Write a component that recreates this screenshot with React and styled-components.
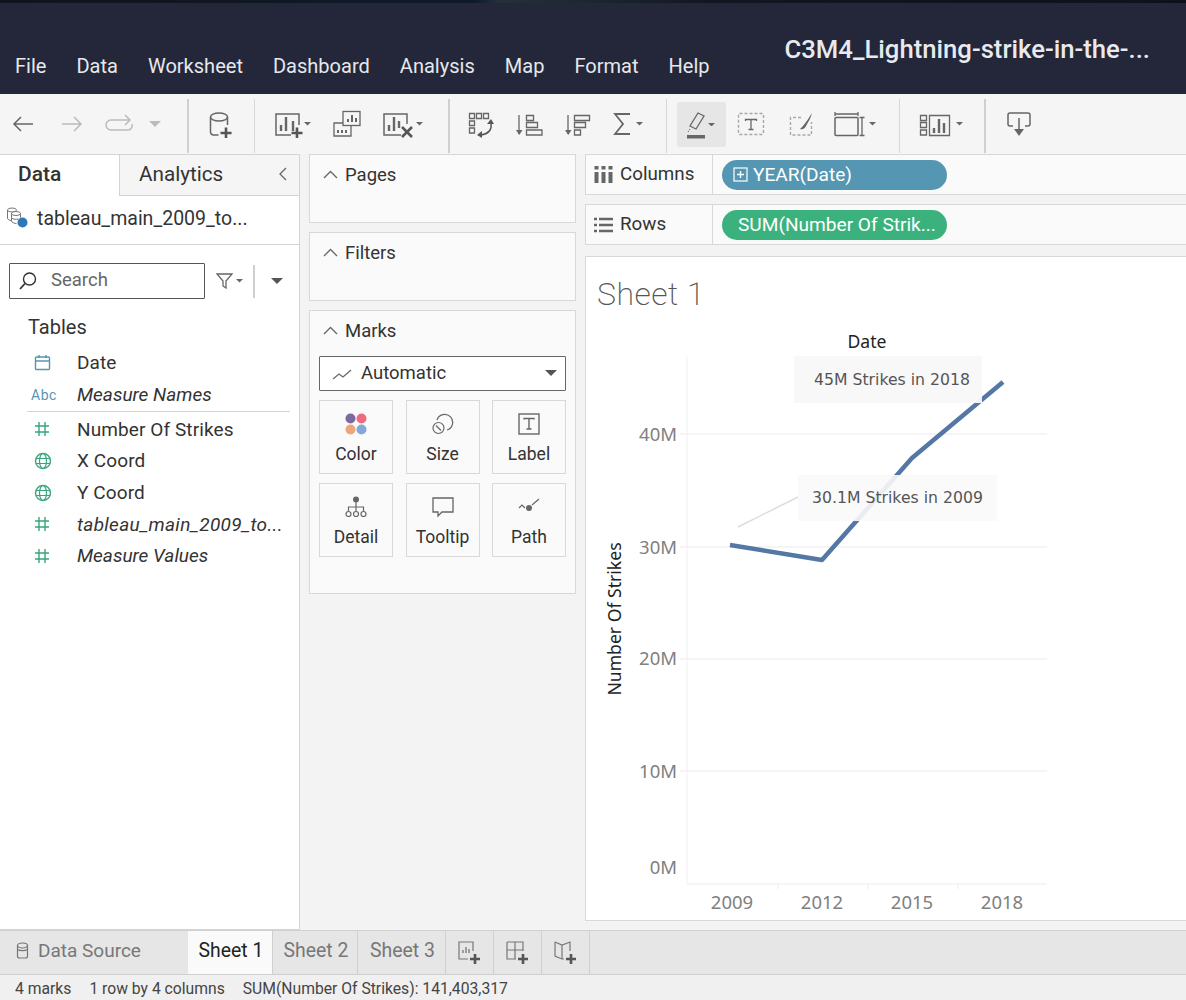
import React from "react";
import styled, { createGlobalStyle } from "styled-components";

const GlobalStyle = createGlobalStyle`
  html, body { margin: 0; padding: 0; background: #f3f3f3; }
  * { box-sizing: border-box; }
  body { font-family: Roboto, "Liberation Sans", sans-serif; color: #333; overflow: hidden; }
`;

const menus = ["File", "Data", "Worksheet", "Dashboard", "Analysis", "Map", "Format", "Help"];

const Caret = ({ size = 5, color = "#666" }) => (
  <svg width={size * 2} height={size} viewBox="0 0 10 5"><path d="M0 0h10L5 5z" fill={color} /></svg>
);

const g = { fill: "none", stroke: "#666", strokeWidth: 1.5 };
const thin = { fill: "none", stroke: "#666", strokeWidth: 1.3 };

const Plus = ({ x, y, s = 5, color = "#555" }) => (
  <path d={`M${x - s} ${y}h${s * 2}M${x} ${y - s}v${s * 2}`} stroke={color} strokeWidth="2.6" fill="none" />
);

// every toolbar svg is 28 high and starts at y=110, so coordinates read straight off the screen
const Tool = ({ ml, w, gap = 0, caret, faded, children }) => (
  <ToolButton $ml={ml} $gap={gap} $faded={faded}>
    <svg width={w} height="28" viewBox={`0 0 ${w} 28`}>{children}</svg>
    {caret && <Caret size={3.5} />}
  </ToolButton>
);

const Toolbar = () => (
  <Bar>
    <Tool ml={11} w={24}><path d="M22 14H3M10 7l-7 7 7 7" {...g} /></Tool>
    <Tool ml={25} w={24} faded><path d="M2 14h19M14 7l7 7-7 7" {...g} /></Tool>
    <Tool ml={21} w={30} faded>
      <path d="M25 10H6a4.500 4.500 0 0 0 0 10h17a4.500 4.500 0 0 0 4-6" {...g} />
      <path d="M20 5l5 5-5 5" {...g} />
    </Tool>
    <ToolButton $ml={14} $faded><Caret size={6} /></ToolButton>
    <Sep $ml={26} $thick />

    <Tool ml={19} w={26}>
      <ellipse cx="11" cy="7" rx="8.500" ry="4" {...g} />
      <path d="M2.500 7v15a3 3 0 0 0 3 3h5M19.500 7v8" {...g} />
      <Plus x={18} y={23} s={5.5} />
    </Tool>
    <Sep $ml={20} />

    <Tool ml={19} w={30} caret>
      <path d="M17 25H2V4h23v11" {...g} />
      <path d="M7 21v-6M12 21V7M19 21V11" stroke="#666" strokeWidth="2.400" />
      <Plus x={23} y={23} s={5.5} />
    </Tool>
    <Tool ml={21} w={30}>
      <path d="M11 13H2v13h17V15" {...thin} />
      <rect x="11" y="1.500" width="17" height="14" fill="#f5f5f5" stroke="#666" strokeWidth="1.300" />
      <path d="M16 12V9M20 12V5M24 12V8M6 23v-3M10 23v-3M14 23v-3" stroke="#666" strokeWidth="2" />
    </Tool>
    <Tool ml={20} w={34} caret>
      <path d="M19 25H2V4h23v10" {...g} />
      <path d="M7 21v-6M12 21V7M17 18V11" stroke="#666" strokeWidth="2.400" />
      <path d="M20 17l10 10M30 17L20 27" stroke="#555" strokeWidth="2.600" />
    </Tool>
    <Sep $ml={25} $thick />

    <Tool ml={18} w={26}>
      <path d="M1.500 3.500h5v5h-5zM8.500 3.500h5v5h-5zM15.500 3.500h5v5h-5zM1.500 11h5v4.500h-5zM1.500 18h5v5h-5z" {...thin} />
      <path d="M23 14c1 6-3 10-10 11" fill="none" stroke="#555" strokeWidth="1.500" />
      <path d="M23 9l-4 5h7zM9 25l5-4v7z" fill="#555" />
    </Tool>
    <Tool ml={22} w={28}>
      <path d="M3 5v19" {...thin} />
      <path d="M0 20h6.500l-3.250 5z" fill="#666" />
      <path d="M10.500 5.500h7v5h-7zM10.500 12.500h11v5h-11zM10.500 20h15.500v5h-15.500z" {...thin} />
    </Tool>
    <Tool ml={21} w={27}>
      <path d="M3 5v19" {...thin} />
      <path d="M0 20h6.500l-3.250 5z" fill="#666" />
      <path d="M9.500 5.500h15v5h-15zM9.500 12.500h11v5h-11zM9.500 20h6v5h-6z" {...thin} />
    </Tool>
    <Tool ml={20} w={20} gap={4} caret>
      <path d="M18 4H3l8 10-8 10h15" fill="none" stroke="#666" strokeWidth="1.800" />
    </Tool>
    <Sep $ml={23} />

    <ActiveTool>
      <svg width="22" height="28" viewBox="0 0 22 28">
        <path d="M12 2l6 3-8 13-6-3z" {...thin} />
        <path d="M4 18l-2 3" stroke="#666" strokeDasharray="1.500 1" />
        <rect x="1" y="24" width="18" height="3.500" fill="#666" />
      </svg>
      <Caret size={3.5} />
    </ActiveTool>

    <Tool ml={11} w={28}>
      <rect x="1.500" y="3.500" width="25" height="21" rx="1" fill="none" stroke="#a8a8a8" strokeWidth="1.400" strokeDasharray="3 2" />
      <path d="M8.500 11V9.500h11V11M14 9.500v10M11.500 19.500h5" {...thin} />
    </Tool>
    <Tool ml={24} w={24}>
      <path d="M12 7.500H1.500v17.500h21V12" fill="none" stroke="#a8a8a8" strokeWidth="1.400" strokeDasharray="3 2" />
      <path d="M23 3c-3 5-6 9-9 13l-3 3c3 1 5-1 6-3 2-4 5-8 6-13z" fill="#666" />
    </Tool>
    <Tool ml={21} w={32} gap={3} caret>
      <path d="M1 4h23M1 2v4M24 2v4" {...thin} />
      <rect x="1" y="7.500" width="23" height="18" rx="1" {...g} />
      <path d="M28 7.500v18M25.500 7.500h5M25.500 25.500h5" {...thin} />
    </Tool>
    <Sep $ml={23} />

    <Tool ml={19} w={32} gap={5} caret>
      <path d="M1.500 5.500h6v5h-6zM1.500 12.500h6v5h-6zM1.500 20h6v5h-6zM10.500 5.500h20v20h-20z" {...thin} />
      <path d="M15 23v-5M20 23V9M25 23V13" stroke="#666" strokeWidth="2.400" />
    </Tool>
    <Sep $ml={21} $thick />

    <Tool ml={20} w={26}>
      <path d="M7 16H4a2 2 0 0 1-2-2V5a2 2 0 0 1 2-2h18a2 2 0 0 1 2 2v9a2 2 0 0 1-2 2h-3" {...g} />
      <path d="M13 8v13" {...g} />
      <path d="M8 19h10l-5 7z" fill="#666" />
    </Tool>
  </Bar>
);

const GridIcon = () => (
  <svg width="16" height="16" viewBox="0 0 16 16">
    <path d="M5 1v14M11 1v14M1 5h14M1 11h14" stroke="#37a77c" strokeWidth="1.400" fill="none" />
  </svg>
);

const GlobeIcon = () => (
  <svg width="18" height="18" viewBox="0 0 18 18">
    <circle cx="9" cy="9" r="7.500" fill="none" stroke="#37a77c" strokeWidth="1.400" />
    <ellipse cx="9" cy="9" rx="3.500" ry="7.500" fill="none" stroke="#37a77c" strokeWidth="1.200" />
    <path d="M2 6.500h14M2 11.500h14" stroke="#37a77c" strokeWidth="1.200" />
  </svg>
);

const CalendarIcon = () => (
  <svg width="17" height="17" viewBox="0 0 17 17">
    <rect x="1.500" y="3" width="14" height="12.500" rx="1" fill="none" stroke="#5596b3" strokeWidth="1.400" />
    <path d="M1.500 7h14M5 1v3M12 1v3" stroke="#5596b3" strokeWidth="1.400" />
  </svg>
);

const DataPanel = () => {
  const fields = [
    { icon: <CalendarIcon />, name: "Date" },
    { icon: <AbcMark>Abc</AbcMark>, name: "Measure Names", italic: true, divider: true },
    { icon: <GridIcon />, name: "Number Of Strikes" },
    { icon: <GlobeIcon />, name: "X Coord" },
    { icon: <GlobeIcon />, name: "Y Coord" },
    { icon: <GridIcon />, name: "tableau_main_2009_to...", italic: true, wide: true },
    { icon: <GridIcon />, name: "Measure Values", italic: true },
  ];
  return (
    <Side>
      <SideTabs>
        <SideTab $on>Data</SideTab>
        <SideTab>
          Analytics
          <svg width="12" height="16" viewBox="0 0 12 16"><path d="M9 2L3 8l6 6" fill="none" stroke="#666" strokeWidth="1.300" /></svg>
        </SideTab>
      </SideTabs>
      <SourceRow>
        <SourceIcon>
          <svg width="22" height="24" viewBox="0 0 22 24">
            <ellipse cx="6" cy="3" rx="4.500" ry="2" fill="none" stroke="#777" strokeWidth="1" />
            <ellipse cx="10" cy="6.500" rx="4.500" ry="2" fill="#fff" stroke="#777" strokeWidth="1" />
            <path d="M1.500 3v8c0 1.500 2 2.500 4 2.500M5.500 6.500v7.500c0 1.500 3 2.500 5 2.500M14.500 6.500v4M5.500 11c2 1.500 5 1.500 7 1" fill="none" stroke="#777" strokeWidth="1" />
            <circle cx="16.500" cy="15.500" r="5" fill="#2f78b7" />
          </svg>
        </SourceIcon>
        tableau_main_2009_to...
      </SourceRow>
      <SearchRow>
        <SearchBox>
          <svg width="20" height="20" viewBox="0 0 20 20">
            <circle cx="11.500" cy="8" r="6" fill="none" stroke="#333" strokeWidth="1.400" />
            <path d="M7 12.500L2 18" stroke="#333" strokeWidth="1.800" />
          </svg>
          <SearchHint>Search</SearchHint>
        </SearchBox>
        <FilterBtn>
          <svg width="17" height="16" viewBox="0 0 17 16"><path d="M1 1h15l-6 7v7l-3-2V8z" fill="none" stroke="#666" strokeWidth="1.300" /></svg>
          <Caret size={3.5} />
        </FilterBtn>
        <SearchSep />
        <MoreBtn><Caret size={6} color="#555" /></MoreBtn>
      </SearchRow>
      <TablesHead>Tables</TablesHead>
      {fields.map((f) => (
        <FieldRow key={f.name} $italic={f.italic} $divider={f.divider} $wide={f.wide}>
          <FieldIcon>{f.icon}</FieldIcon>
          {f.name}
        </FieldRow>
      ))}
    </Side>
  );
};

const MarkGlyph = {
  Color: (
    <svg width="22" height="22" viewBox="0 0 22 22">
      <circle cx="5.500" cy="5.500" r="5" fill="#7c6a9c" />
      <circle cx="16.500" cy="5.500" r="5" fill="#ee6b80" />
      <circle cx="5.500" cy="16.500" r="5" fill="#eda57a" />
      <circle cx="16.500" cy="16.500" r="5" fill="#85a9d6" />
    </svg>
  ),
  Size: (
    <svg width="22" height="22" viewBox="0 0 22 22">
      <path d="M5 7a8 8 0 1 1 10 10" fill="none" stroke="#666" strokeWidth="1.200" />
      <circle cx="6.500" cy="15" r="5.500" fill="none" stroke="#666" strokeWidth="1.200" />
      <path d="M4 12.500l5 5" stroke="#666" strokeWidth="1.200" />
    </svg>
  ),
  Label: (
    <svg width="22" height="22" viewBox="0 0 22 22">
      <rect x="1" y="1" width="20" height="20" fill="none" stroke="#666" strokeWidth="1.400" />
      <path d="M6 6.500V5.500h10v1M11 5.500V16M8.500 16h5" fill="none" stroke="#666" strokeWidth="1.400" />
    </svg>
  ),
  Detail: (
    <svg width="22" height="22" viewBox="0 0 22 22">
      <circle cx="11" cy="3.500" r="3" fill="#666" />
      <path d="M11 6v5M3.500 15v-4h15v4M11 11v4" fill="none" stroke="#666" strokeWidth="1.200" />
      <circle cx="3.500" cy="18" r="2.500" fill="none" stroke="#666" strokeWidth="1.200" />
      <circle cx="11" cy="18" r="2.500" fill="none" stroke="#666" strokeWidth="1.200" />
      <circle cx="18.500" cy="18" r="2.500" fill="none" stroke="#666" strokeWidth="1.200" />
    </svg>
  ),
  Tooltip: (
    <svg width="22" height="22" viewBox="0 0 22 22">
      <path d="M1 2h20v14H10l-4 4v-4H1z" fill="none" stroke="#666" strokeWidth="1.300" />
    </svg>
  ),
  Path: (
    <svg width="22" height="22" viewBox="0 0 22 22">
      <path d="M1 12l3-3 3 3M14 9l7-6" fill="none" stroke="#666" strokeWidth="1.200" />
      <circle cx="11" cy="12" r="3" fill="#666" />
    </svg>
  ),
};

const CollapseArrow = () => (
  <svg width="15" height="9" viewBox="0 0 15 9"><path d="M1 8l6.500-6.500L14 8" fill="none" stroke="#666" strokeWidth="1.300" /></svg>
);

const MiddlePanel = () => (
  <Middle>
    <Card $h={69}><CardHead><CollapseArrow />Pages</CardHead></Card>
    <Card $h={69}><CardHead><CollapseArrow />Filters</CardHead></Card>
    <Card $h={284}>
      <CardHead><CollapseArrow />Marks</CardHead>
      <MarkSelect>
        <svg width="20" height="12" viewBox="0 0 20 12"><path d="M1 11l6-5 4 3 8-7" fill="none" stroke="#666" strokeWidth="1.200" /></svg>
        <SelectText>Automatic</SelectText>
        <SelectCaret><Caret size={6} color="#555" /></SelectCaret>
      </MarkSelect>
      <MarkGrid>
        {Object.keys(MarkGlyph).map((k) => (
          <MarkCell key={k}>
            {MarkGlyph[k]}
            <span>{k}</span>
          </MarkCell>
        ))}
      </MarkGrid>
    </Card>
  </Middle>
);

const Chart = () => (
  <ChartSvg viewBox="585 330 601 590" width="601" height="590">
    <path d="M687 356V884" stroke="#f0f0f0" />
    {[434, 547, 659, 771].map((y) => (
      <path key={y} d={`M680 ${y}H1047`} stroke="#f2f2f2" strokeWidth="1.500" />
    ))}
    <path d="M687 884H1047M778 884v5M868 884v5M958 884v5" stroke="#ececec" />
    {[["40M", 441], ["30M", 554], ["20M", 665], ["10M", 778], ["0M", 874]].map(([t, y]) => (
      <AxisText key={t} x="677" y={y} textAnchor="end">{t}</AxisText>
    ))}
    {[[2009, 732], [2012, 822], [2015, 912], [2018, 1002]].map(([t, x]) => (
      <AxisText key={t} x={x} y="909" textAnchor="middle">{t}</AxisText>
    ))}
    <HeadText x="867" y="348" textAnchor="middle">Date</HeadText>
    <HeadText x="621" y="619" textAnchor="middle" transform="rotate(-90 621 619)">Number Of Strikes</HeadText>
    <path d="M738 527L798 497" stroke="#dddddd" strokeWidth="1.500" />
    <path d="M730 545L822 560L912 458L1003 382" fill="none" stroke="#5577a6" strokeWidth="4.500" strokeLinejoin="round" />
    <rect x="794" y="356" width="188" height="47" fill="#f8f8f8" fillOpacity="0.94" />
    <rect x="798" y="475" width="199" height="46" fill="#f9f9f9" fillOpacity="0.9" />
    <NoteText x="814" y="385">45M Strikes in 2018</NoteText>
    <NoteText x="812" y="503">30.1M Strikes in 2009</NoteText>
  </ChartSvg>
);

const SheetAdd = ({ children }) => (
  <AddTab>
    <svg width="26" height="26" viewBox="0 0 26 26">
      {children}
      <Plus x={18} y={19} s={5} />
    </svg>
  </AddTab>
);

export default function App() {
  return (
    <Page>
      <GlobalStyle />
      <TopStrip />
      <Header>
        <MenuRow>
          {menus.map((m) => <MenuItem key={m}>{m}</MenuItem>)}
        </MenuRow>
        <WorkbookTitle>C3M4_Lightning-strike-in-the-...</WorkbookTitle>
      </Header>
      <Toolbar />
      <Main>
        <DataPanel />
        <MiddlePanel />
        <Right>
          <Shelf>
            <ShelfLabel>
              <svg width="19" height="17" viewBox="0 0 19 17">
                <path d="M2.500 6v11M9.500 6v11M16.500 6v11" stroke="#666" strokeWidth="4" />
                <path d="M2.500 0v3.500M9.500 0v3.500M16.500 0v3.500" stroke="#666" strokeWidth="4" />
              </svg>
              <ShelfText>Columns</ShelfText>
            </ShelfLabel>
            <Pill $color="#5596b3">
              <svg width="15" height="15" viewBox="0 0 15 15">
                <rect x="1" y="1" width="13" height="13" fill="none" stroke="#fff" strokeWidth="1.200" />
                <path d="M4 7.500h7M7.500 4v7" stroke="#fff" strokeWidth="1.400" />
              </svg>
              YEAR(Date)
            </Pill>
          </Shelf>
          <Shelf>
            <ShelfLabel>
              <svg width="19" height="16" viewBox="0 0 19 16">
                <path d="M0 2h3M5 2h14M0 8h3M5 8h14M0 14h3M5 14h14" stroke="#666" strokeWidth="2.400" />
              </svg>
              <ShelfText>Rows</ShelfText>
            </ShelfLabel>
            <Pill $color="#3bb27e" $pad={16}>SUM(Number Of Strik...</Pill>
          </Shelf>
          <Sheet>
            <SheetTitle>Sheet 1</SheetTitle>
            <Chart />
          </Sheet>
        </Right>
      </Main>
      <Tabs>
        <SourceTab>
          <svg width="13" height="17" viewBox="0 0 13 17">
            <ellipse cx="6.500" cy="3.500" rx="5" ry="2.500" fill="none" stroke="#777" strokeWidth="1.200" />
            <path d="M1.500 3.500V14a2 2 0 0 0 2 2h6a2 2 0 0 0 2-2V3.500M1.500 7.500c2 1.500 8 1.500 10 0" fill="none" stroke="#777" strokeWidth="1.200" />
          </svg>
          Data Source
        </SourceTab>
        <SheetTab $on $w={85}>Sheet 1</SheetTab>
        <SheetTab $w={85}>Sheet 2</SheetTab>
        <SheetTab $w={88}>Sheet 3</SheetTab>
        <SheetAdd>
          <path d="M16 11V2H2v17h9" fill="none" stroke="#777" strokeWidth="1.200" />
          <path d="M6 13v-3M9 13V7M12 13v-4" stroke="#777" strokeWidth="1.300" />
        </SheetAdd>
        <SheetAdd>
          <path d="M2 2h16v9M2 2v17h9M2 10h16M10 2v17" fill="none" stroke="#777" strokeWidth="1.200" />
        </SheetAdd>
        <SheetAdd>
          <path d="M2 2l7 3 8-3v9M2 2v14l7 3h2M9 5v14" fill="none" stroke="#777" strokeWidth="1.200" />
        </SheetAdd>
      </Tabs>
      <Status>
        <span>4 marks</span>
        <span>1 row by 4 columns</span>
        <span>SUM(Number Of Strikes): 141,403,317</span>
      </Status>
    </Page>
  );
}

const Page = styled.div`
  width: 1186px;
  height: 1000px;
  display: flex;
  flex-direction: column;
  overflow: hidden;
`;

const TopStrip = styled.div`
  height: 3px;
  flex: none;
  background: linear-gradient(90deg, #10141c, #0f1a2a 40%, #26303c 42%, #101722 60%, #0d121a);
`;

const Header = styled.header`
  height: 91px;
  flex: none;
  background: #232739;
  display: flex;
  align-items: flex-end;
  justify-content: space-between;
  padding: 0 36px 14px 15px;
`;

const MenuRow = styled.nav`
  display: flex;
  gap: 30px;
`;

const MenuItem = styled.span`
  color: #e6e8ec;
  font-size: 20.050px;
  line-height: 28px;
`;

const WorkbookTitle = styled.div`
  color: #e8eaee;
  font-size: 25.700px;
  font-weight: 500;
  line-height: 30px;
  margin-bottom: 16px;
`;

const Bar = styled.div`
  height: 60px;
  flex: none;
  background: #f5f5f5;
  display: flex;
  align-items: center;
`;

const ToolButton = styled.div`
  height: 28px;
  flex: none;
  margin-left: ${(p) => p.$ml}px;
  display: flex;
  align-items: center;
  gap: ${(p) => p.$gap || 0}px;
  opacity: ${(p) => (p.$faded ? 0.4 : 1)};
`;

const ActiveTool = styled.div`
  width: 49px;
  height: 45px;
  flex: none;
  margin: 1px 0 0 10px;
  padding-left: 9px;
  display: flex;
  align-items: center;
  gap: 0;
  background: #e6e6e6;
  border-radius: 2px;
`;

const Sep = styled.div`
  width: ${(p) => (p.$thick ? 2 : 1)}px;
  height: 54px;
  flex: none;
  margin: 4px 0 0 ${(p) => p.$ml}px;
  background: ${(p) => (p.$thick ? "#d0d0d0" : "#d8d8d8")};
`;

const Main = styled.main`
  height: 776px;
  flex: none;
  display: flex;
  background: #f3f3f3;
`;

const Side = styled.aside`
  width: 300px;
  flex: none;
  background: #fff;
  border-top: 1px solid #d4d4d4;
  border-right: 1px solid #d4d4d4;
  border-bottom: 1px solid #d4d4d4;
`;

const SideTabs = styled.div`
  display: flex;
  height: 41px;
`;

const SideTab = styled.div`
  width: ${(p) => (p.$on ? 119 : 180)}px;
  padding: 0 10px ${(p) => (p.$on ? 4 : 2)}px ${(p) => (p.$on ? 18 : 19)}px;
  display: flex;
  align-items: center;
  justify-content: space-between;
  font-size: ${(p) => (p.$on ? 21 : 20.7)}px;
  color: #333;
  background: ${(p) => (p.$on ? "#fff" : "#f5f5f5")};
  border-left: ${(p) => (p.$on ? "none" : "1px solid #d4d4d4")};
  border-bottom: ${(p) => (p.$on ? "none" : "1px solid #d4d4d4")};
  font-weight: ${(p) => (p.$on ? 500 : 400)};
`;

const SourceRow = styled.div`
  height: 49px;
  display: flex;
  align-items: center;
  font-size: 19.500px;
  color: #333;
  padding: 0 0 3px 6px;
  gap: 9px;
  border-bottom: 1px solid #d4d4d4;
`;

const SourceIcon = styled.span`
  display: flex;
  width: 22px;
`;

const SearchRow = styled.div`
  display: flex;
  align-items: center;
  padding: 18px 0 0 9px;
`;

const SearchBox = styled.div`
  width: 196px;
  height: 36px;
  border: 1px solid #555;
  border-radius: 1px;
  display: flex;
  align-items: center;
  gap: 13px;
  padding-left: 8px;
  font-size: 18.500px;
  color: #666;
`;

const SearchHint = styled.span`
  padding-bottom: 2px;
`;

const FilterBtn = styled.div`
  width: 48px;
  display: flex;
  align-items: center;
  justify-content: center;
  gap: 3px;
`;

const SearchSep = styled.div`
  width: 2px;
  height: 33px;
  background: #cfcfcf;
`;

const MoreBtn = styled.div`
  width: 44px;
  display: flex;
  justify-content: center;
`;

const TablesHead = styled.div`
  padding: 16px 0 0 28px;
  font-size: 20px;
  line-height: 24px;
  color: #333;
  margin-bottom: 8px;
`;

const FieldRow = styled.div`
  height: ${(p) => (p.$divider ? 33 : 31.6)}px;
  margin: ${(p) => (p.$divider ? "0 9px 2px 27px" : "0 9px 0 27px")};
  display: flex;
  align-items: center;
  font-size: 19px;
  letter-spacing: ${(p) => (p.$wide ? 0.3 : p.$italic ? 0 : 0.1)}px;
  color: #333;
  font-style: ${(p) => (p.$italic ? "italic" : "normal")};
  white-space: nowrap;
  border-bottom: ${(p) => (p.$divider ? "1px solid #d4d4d4" : "none")};
`;

const FieldIcon = styled.span`
  width: 50px;
  flex: none;
  display: flex;
  padding-left: 7px;
  font-style: normal;
`;

const AbcMark = styled.span`
  font-size: 14px;
  color: #5596b3;
  margin-left: -3px;
  letter-spacing: 0.500px;
`;

const Middle = styled.section`
  width: 285px;
  flex: none;
  padding: 0 9px 0 9px;
  display: flex;
  flex-direction: column;
  gap: 9px;
`;

const Card = styled.div`
  height: ${(p) => p.$h}px;
  flex: none;
  background: #fafafa;
  border: 1px solid #d8d8d8;
`;

const CardHead = styled.div`
  height: 39px;
  display: flex;
  align-items: center;
  gap: 7px;
  padding-left: 13px;
  font-size: 18.500px;
  color: #333;
`;

const MarkSelect = styled.div`
  position: relative;
  height: 35px;
  margin: 6px 9px 9px;
  background: #fff;
  border: 1px solid #666;
  border-radius: 1px;
  display: flex;
  align-items: center;
  gap: 9px;
  padding-left: 12px;
  font-size: 18.500px;
`;

const SelectText = styled.span`
  padding-bottom: 2px;
`;

const SelectCaret = styled.span`
  position: absolute;
  right: 8px;
  top: 13px;
  display: flex;
`;

const MarkGrid = styled.div`
  display: grid;
  grid-template-columns: repeat(3, 74px);
  grid-auto-rows: 74px;
  column-gap: 12.500px;
  row-gap: 9px;
  padding: 0 9px;
`;

const MarkCell = styled.div`
  background: #fafafa;
  border: 1px solid #d8d8d8;
  display: flex;
  flex-direction: column;
  align-items: center;
  justify-content: center;
  gap: 9px;
  font-size: 17.500px;
  color: #333;
  padding-top: 3px;
`;

const Right = styled.section`
  flex: 1;
  min-width: 0;
  display: flex;
  flex-direction: column;
  gap: 9px;
`;

const Shelf = styled.div`
  height: 41px;
  flex: none;
  background: #fafafa;
  border-top: 1px solid #d8d8d8;
  border-bottom: 1px solid #d8d8d8;
  border-left: 1px solid #d8d8d8;
  display: flex;
  align-items: center;
`;

const ShelfLabel = styled.div`
  width: 127px;
  height: 100%;
  flex: none;
  display: flex;
  align-items: center;
  gap: 7px;
  padding-left: 8px;
  font-size: 18.800px;
  color: #333;
  border-right: 1px solid #d8d8d8;
`;

const ShelfText = styled.span`
  padding-bottom: 2px;
`;

const Pill = styled.div`
  width: 225px;
  height: 30px;
  margin-left: 9px;
  border-radius: 15px;
  background: ${(p) => p.$color};
  color: #fff;
  font-size: 19.100px;
  display: flex;
  align-items: center;
  gap: 5px;
  padding-left: ${(p) => p.$pad || 11}px;
  white-space: nowrap;
  overflow: hidden;
`;

const Sheet = styled.div`
  flex: none;
  margin-top: 2px;
  height: 665px;
  background: #fff;
  border: 1px solid #d8d8d8;
  border-right: none;
`;

const SheetTitle = styled.div`
  padding: 18px 0 0 11px;
  height: 73px;
  font-size: 32px;
  line-height: 38px;
  font-weight: 200;
  letter-spacing: 0.500px;
  color: #555;
`;

const ChartSvg = styled.svg`
  display: block;
  margin-left: -1px;
`;

const AxisText = styled.text`
  font-family: "Noto Sans", sans-serif;
  font-size: 18.500px;
  fill: #808080;
`;

const HeadText = styled.text`
  font-family: "Noto Sans", sans-serif;
  font-size: 17.600px;
  fill: #222;
`;

const NoteText = styled.text`
  font-family: "DejaVu Sans", sans-serif;
  font-size: 15.700px;
  fill: #555;
`;

const Tabs = styled.div`
  height: 45px;
  flex: none;
  background: #e6e6e6;
  border-top: 1px solid #d0d0d0;
  border-bottom: 1px solid #d0d0d0;
  display: flex;
`;

const SourceTab = styled.div`
  width: 188px;
  flex: none;
  display: flex;
  align-items: center;
  gap: 9px;
  padding: 0 0 5px 16px;
  font-size: 19px;
  color: #777;
`;

const SheetTab = styled.div`
  width: ${(p) => p.$w}px;
  flex: none;
  display: flex;
  align-items: center;
  justify-content: center;
  padding: 0 0 5px 2px;
  font-size: 19.400px;
  color: ${(p) => (p.$on ? "#222" : "#777")};
  background: ${(p) => (p.$on ? "#fafafa" : "transparent")};
  border-right: 1px solid #d0d0d0;
`;

const AddTab = styled.div`
  width: 48px;
  flex: none;
  display: flex;
  align-items: center;
  justify-content: center;
  border-right: 1px solid #d0d0d0;
`;

const Status = styled.footer`
  flex: 1;
  background: #f0f0f0;
  display: flex;
  align-items: center;
  gap: 18px;
  padding: 1px 0 0 15px;
  font-size: 15.700px;
  color: #444;
`;
